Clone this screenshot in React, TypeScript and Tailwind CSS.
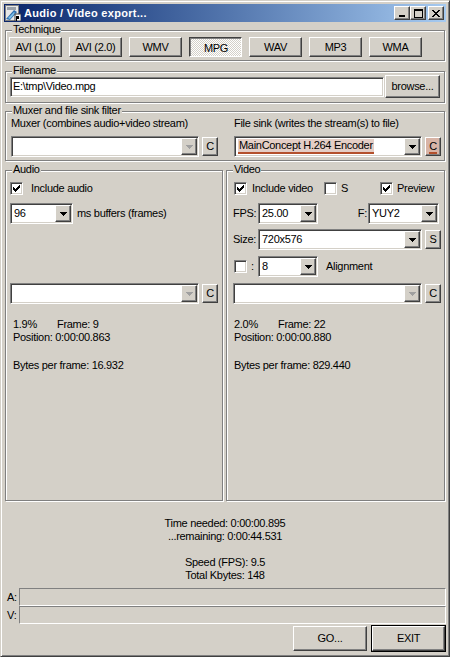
import type React from "react"

// classic Windows 2000 bevels
const raised =
  "border border-t-white border-l-white border-r-[#404040] border-b-[#404040] shadow-[inset_-1px_-1px_0_#808080] bg-[#d4d0c8]"
const pressed =
  "border border-t-[#404040] border-l-[#404040] border-r-white border-b-white shadow-[inset_1px_1px_0_#808080]"
const sunken =
  "border border-t-[#808080] border-l-[#808080] border-r-white border-b-white shadow-[inset_1px_1px_0_#404040,inset_-1px_-1px_0_#d4d0c8]"
const shallow = "border border-t-[#808080] border-l-[#808080] border-r-white border-b-white"
const etched = "border border-[#808080] shadow-[inset_1px_1px_0_#fff,1px_1px_0_#fff]"

function Group({ label, className = "", children }: { label: string; className?: string; children: React.ReactNode }) {
  return (
    <div className={`relative ${etched} ${className}`}>
      <span className="absolute left-[6px] -top-[8px] bg-[#d4d0c8] px-[1px] leading-[13px]">{label}</span>
      {children}
    </div>
  )
}

function Arrow({ disabled }: { disabled?: boolean }) {
  return (
    <svg width="7" height="4" viewBox="0 0 7 4">
      <path d="M0 0H7V1H6V2H5V3H4V4H3V3H2V2H1V1H0Z" fill={disabled ? "#a0a0a0" : "#000"} />
    </svg>
  )
}

function Combo({
  className = "",
  value = "",
  disabled,
  hl,
}: {
  className?: string
  value?: string
  disabled?: boolean
  hl?: boolean
}) {
  return (
    <div className={`flex h-[21px] bg-white p-[1px] ${sunken} ${className}`}>
      <div className="flex flex-1 items-center overflow-hidden pl-[2px]">
        {hl ? (
          <span className="h-[15px] border-b-2 border-[#b4502c] bg-[#e4cec6] px-[1px] leading-[13px] whitespace-nowrap">
            {value}
          </span>
        ) : (
          <span className="leading-[13px] whitespace-nowrap">{value}</span>
        )}
      </div>
      <div className={`flex h-full w-[16px] items-center justify-center ${raised}`}>
        <Arrow disabled={disabled} />
      </div>
    </div>
  )
}

function SmallBtn({ label, hl }: { label: string; hl?: boolean }) {
  return (
    <div
      className={`flex h-[19px] w-[16px] items-center justify-center leading-[13px] ${raised} ${
        hl ? "bg-[#d8b4a6]" : ""
      }`}
    >
      <span className={hl ? "border-b-2 border-[#b4502c] leading-[12px]" : ""}>{label}</span>
    </div>
  )
}

function Check({ checked, className = "" }: { checked?: boolean; className?: string }) {
  return (
    <div className={`flex h-[13px] w-[13px] shrink-0 items-center justify-center bg-white ${sunken} ${className}`}>
      {checked && (
        <svg width="7" height="7" viewBox="0 0 7 7">
          <path
            d="M6 0h1v1h-1z M5 1h2v1h-2z M0 2h1v1h-1z M4 2h3v1h-3z M0 3h2v1h-2z M3 3h3v1h-3z M0 4h5v1h-5z M1 5h3v1h-3z M2 6h1v1h-1z"
            fill="#000"
          />
        </svg>
      )}
    </div>
  )
}

function TitleButton({ children, className = "" }: { children: React.ReactNode; className?: string }) {
  return <div className={`flex h-[14px] w-[16px] items-center justify-center ${raised} ${className}`}>{children}</div>
}

function AppIcon() {
  return (
    <svg width="16" height="16" viewBox="0 0 16 16">
      <rect x="0.5" y="0.5" width="13" height="15" fill="#e8e8e8" stroke="#808080" />
      <rect x="2" y="2" width="9" height="3" fill="#9aa0a8" />
      <path d="M1 14 L9 5 L12 7 L5 15 Z" fill="#2d6fb0" />
      <path d="M3 13 L9 7 L10 8 L5 14 Z" fill="#7ec0e8" />
      <rect x="10" y="9" width="6" height="7" fill="#fff" stroke="#404040" strokeWidth="1" />
      <path d="M12 11h2v3h-2v2h-1v-5z" fill="#000" />
    </svg>
  )
}

const techniques = ["AVI (1.0)", "AVI (2.0)", "WMV", "MPG", "WAV", "MP3", "WMA"]

export default function App() {
  return (
    <div className="h-[657px] w-[450px] border border-t-[#d4d0c8] border-l-[#d4d0c8] border-r-[#404040] border-b-[#404040] bg-[#d4d0c8] pt-[3px] pr-[3px] pl-[3px] shadow-[inset_1px_1px_0_#fff,inset_-1px_-1px_0_#808080] font-['Liberation_Sans',Arial,sans-serif] text-[11px] leading-[13px] tracking-[-0.3px] text-black">
      {/* title bar */}
      <div className="flex h-[18px] items-center bg-linear-to-r from-[#0a246a] to-[#a6caf0] pl-[1px]">
        <AppIcon />
        <span className="ml-[3px] text-[11px] font-bold tracking-[0.3px] text-white">Audio / Video export...</span>
        <div className="ml-auto mr-[2px] flex items-center">
          <TitleButton>
            <svg width="6" height="8" viewBox="0 0 6 8">
              <rect x="0" y="6" width="6" height="2" fill="#000" />
            </svg>
          </TitleButton>
          <TitleButton>
            <svg width="9" height="9" viewBox="0 0 9 9">
              <path d="M0 0h9v9h-9z M1 2v6h7v-6z" fill="#000" fillRule="evenodd" />
            </svg>
          </TitleButton>
          <TitleButton className="ml-[2px]">
            <svg width="8" height="7" viewBox="0 0 8 7">
              <path
                d="M0 0h2v1h-2z M6 0h2v1h-2z M1 1h2v1h-2z M5 1h2v1h-2z M2 2h4v1h-4z M3 3h2v1h-2z M2 4h4v1h-4z M1 5h2v1h-2z M5 5h2v1h-2z M0 6h2v1h-2z M6 6h2v1h-2z"
                fill="#000"
              />
            </svg>
          </TitleButton>
        </div>
      </div>

      <div className="flex flex-col px-[1px]">
        {/* Technique */}
        <Group label="Technique" className="mt-[8px] pt-[6px] pb-[3px] pl-[3px]">
          <div className="flex gap-[7px]">
            {techniques.map((t) =>
              t === "MPG" ? (
                <div
                  key={t}
                  className={`flex h-[20px] w-[53px] items-center justify-center bg-[image:repeating-conic-gradient(#ffffff_0_25%,#d4d0c8_0_50%)] bg-[length:2px_2px] pt-[2px] pl-[1px] ${pressed}`}
                >
                  {t}
                </div>
              ) : (
                <div key={t} className={`flex h-[20px] w-[53px] items-center justify-center ${raised}`}>
                  {t}
                </div>
              )
            )}
          </div>
        </Group>

        {/* Filename */}
        <Group label="Filename" className="mt-[10px] pt-[3px] pb-[4px] pl-[4px]">
          <div className="flex h-[23px] items-center">
            <div className={`flex h-[20px] w-[374px] items-center bg-white pl-[2px] ${sunken}`}>E:\tmp\Video.mpg</div>
            <div className={`ml-[1px] flex h-[23px] w-[55px] items-center justify-center ${raised}`}>browse...</div>
          </div>
        </Group>

        {/* Muxer */}
        <Group label="Muxer and file sink filter" className="mt-[8px] pt-[5px] pb-[3px] pl-[5px]">
          <div className="flex">
            <div className="flex w-[223px] flex-col">
              <span>Muxer (combines audio+video stream)</span>
              <div className="mt-[6px] flex items-center gap-[3px]">
                <Combo className="w-[188px]" disabled />
                <SmallBtn label="C" />
              </div>
            </div>
            <div className="flex flex-col">
              <span>File sink (writes the stream(s) to file)</span>
              <div className="mt-[6px] flex items-center gap-[3px]">
                <Combo className="w-[188px]" value="MainConcept H.264 Encoder" hl />
                <SmallBtn label="C" hl />
              </div>
            </div>
          </div>
        </Group>

        {/* Audio / Video */}
        <div className="mt-[9px] flex gap-[3px]">
          <Group label="Audio" className="h-[331px] w-[218px] pt-[11px] pl-[4px]">
            <div className="flex flex-col">
              <div className="flex h-[13px] items-center">
                <Check checked />
                <span className="ml-[8px]">Include audio</span>
              </div>
              <div className="mt-[8px] flex items-center">
                <Combo className="w-[63px]" value="96" />
                <span className="ml-[4px]">ms buffers (frames)</span>
              </div>
              <div className="mt-[59px] flex items-center gap-[3px]">
                <Combo className="w-[189px]" disabled />
                <SmallBtn label="C" />
              </div>
              <div className="mt-[14px] ml-[3px] flex flex-col">
                <div className="flex">
                  <span className="w-[44px]">1.9%</span>
                  <span>Frame: 9</span>
                </div>
                <span>Position: 0:00:00.863</span>
                <span className="mt-[15px]">Bytes per frame: 16.932</span>
              </div>
            </div>
          </Group>

          <Group label="Video" className="h-[331px] w-[219px] pt-[11px] pl-[6px] pr-[3px]">
            <div className="flex flex-col">
              <div className="flex h-[13px] items-center">
                <Check checked className="ml-[1px]" />
                <span className="ml-[5px] w-[72px]">Include video</span>
                <Check />
                <span className="ml-[4px] w-[39px]">S</span>
                <Check checked />
                <span className="ml-[4px]">Preview</span>
              </div>
              <div className="mt-[8px] mr-[2px] flex items-center">
                <span className="w-[25px]">FPS:</span>
                <Combo className="w-[60px]" value="25.00" />
                <span className="ml-auto mr-[1px]">F:</span>
                <Combo className="w-[71px]" value="YUY2" />
              </div>
              <div className="mt-[5px] flex items-center">
                <span className="w-[25px]">Size:</span>
                <Combo className="w-[164px]" value="720x576" />
                <div className="ml-[3px]">
                  <SmallBtn label="S" />
                </div>
              </div>
              <div className="mt-[6px] flex items-center">
                <Check className="ml-[1px]" />
                <span className="ml-[4px] w-[7px]">:</span>
                <Combo className="w-[60px]" value="8" />
                <span className="ml-[8px]">Alignment</span>
              </div>
              <div className="mt-[6px] flex items-center gap-[3px]">
                <Combo className="w-[189px]" disabled />
                <SmallBtn label="C" />
              </div>
              <div className="mt-[14px] ml-[1px] flex flex-col">
                <div className="flex">
                  <span className="w-[44px]">2.0%</span>
                  <span>Frame: 22</span>
                </div>
                <span>Position: 0:00:00.880</span>
                <span className="mt-[15px]">Bytes per frame: 829.440</span>
              </div>
            </div>
          </Group>
        </div>
      </div>

      {/* totals */}
      <div className="mt-[16px] flex flex-col items-center">
        <span>Time needed: 0:00:00.895</span>
        <span>...remaining: 0:00:44.531</span>
        <span className="mt-[13px]">Speed (FPS): 9.5</span>
        <span>Total Kbytes: 148</span>
      </div>

      {/* progress */}
      <div className="mt-[6px] flex flex-col">
        <div className="flex h-[18px] items-center">
          <span className="w-[15px] pl-[3px]">A:</span>
          <div className={`h-[18px] flex-1 ${shallow}`} />
        </div>
        <div className="flex h-[18px] items-center">
          <span className="w-[15px] pl-[3px]">V:</span>
          <div className={`h-[18px] flex-1 ${shallow}`} />
        </div>
      </div>

      {/* buttons */}
      <div className="mt-[1px] flex h-[27px] items-center justify-end gap-[4px]">
        <div className={`flex h-[25px] w-[74px] items-center justify-center ${raised}`}>GO...</div>
        <div className="h-[27px] w-[75px] border border-black">
          <div className={`flex h-full w-full items-center justify-center ${raised}`}>EXIT</div>
        </div>
      </div>
    </div>
  )
}
